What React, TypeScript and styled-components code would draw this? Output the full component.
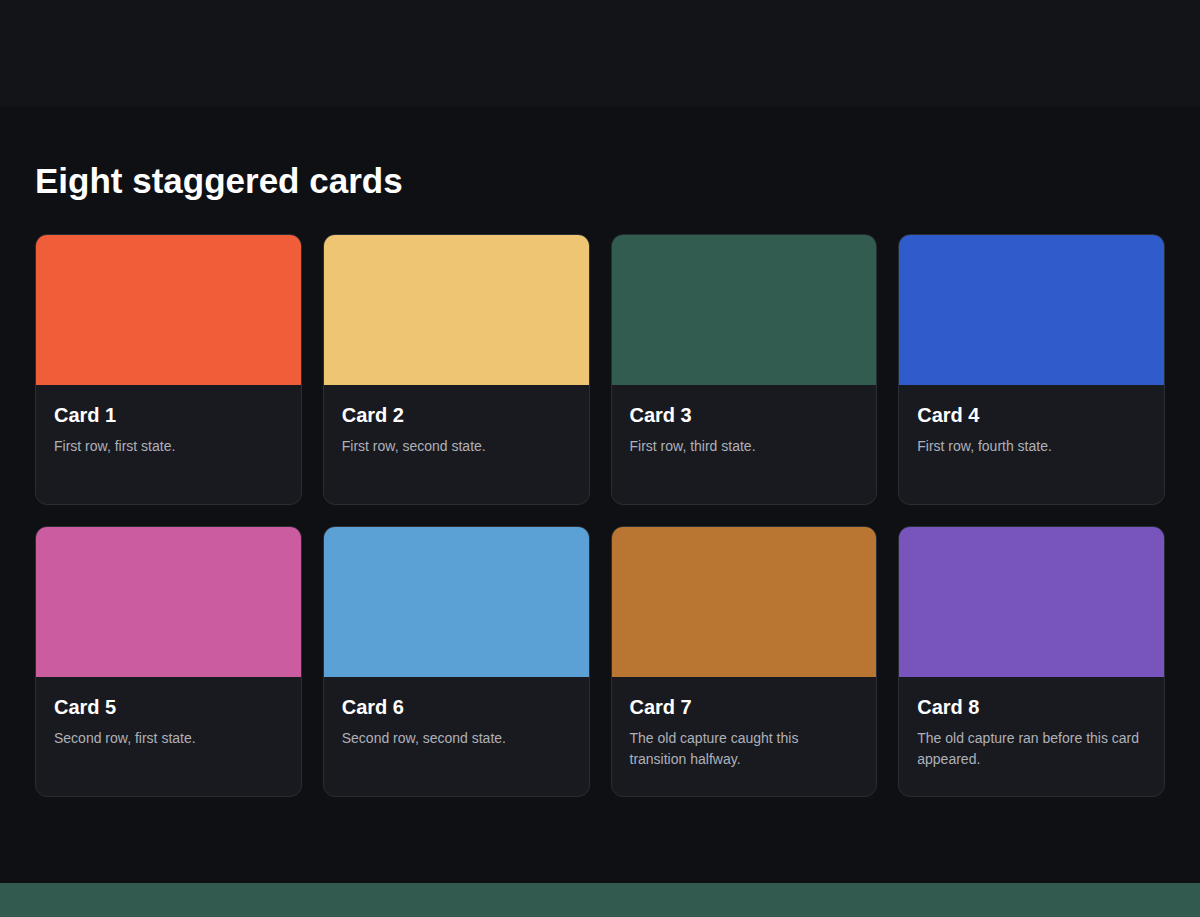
import React from "react";
import styled, { createGlobalStyle } from "styled-components";

const Global = createGlobalStyle`
  html, body { margin: 0; padding: 0; background: #0f1014; }
  body { font-family: "Liberation Sans", Arial, sans-serif; color: #fff; }
  * { box-sizing: border-box; }
`;

const Page = styled.div`
  min-height: 917px;
  display: flex;
  flex-direction: column;
  background: #0f1014;
`;

const TopBand = styled.header`
  height: 107px;
  background: #131418;
`;

const Main = styled.main`
  flex: 1;
  padding: 52px 35px 0;
`;

const Title = styled.h1`
  margin: 0 0 31px;
  font-size: 35px;
  line-height: 44px;
  font-weight: 700;
  color: #ffffff;
`;

const Grid = styled.div`
  display: grid;
  grid-template-columns: repeat(4, 1fr);
  column-gap: 21px;
  row-gap: 21px;
`;

const Card = styled.article`
  height: 271px;
  border: 1px solid #2b2d34;
  border-radius: 12px;
  overflow: hidden;
  background: #191a20;
  display: flex;
  flex-direction: column;
`;

const Swatch = styled.div<{ $color: string }>`
  height: 150px;
  background: ${(p) => p.$color};
  flex-shrink: 0;
`;

const Body = styled.div`
  padding: 17px 18px;
`;

const CardTitle = styled.h2`
  margin: 0 0 8px;
  font-size: 20px;
  line-height: 26px;
  font-weight: 700;
  color: #ffffff;
`;

const CardText = styled.p`
  margin: 0;
  font-size: 14px;
  line-height: 21px;
  color: #afb1b8;
`;

const Footer = styled.footer`
  height: 34px;
  background: #335a4e;
  margin-top: 85px;
`;

const cards = [
  { color: "#f05e39", title: "Card 1", text: "First row, first state." },
  { color: "#eec673", title: "Card 2", text: "First row, second state." },
  { color: "#315c4f", title: "Card 3", text: "First row, third state." },
  { color: "#2f5bcb", title: "Card 4", text: "First row, fourth state." },
  { color: "#cc5ca0", title: "Card 5", text: "Second row, first state." },
  { color: "#5ca1d6", title: "Card 6", text: "Second row, second state." },
  { color: "#b97632", title: "Card 7", text: "The old capture caught this transition halfway." },
  { color: "#7855bd", title: "Card 8", text: "The old capture ran before this card appeared." },
];

export default function App() {
  return (
    <>
      <Global />
      <Page>
        <TopBand />
        <Main>
          <Title>Eight staggered cards</Title>
          <Grid>
            {cards.map((c) => (
              <Card key={c.title}>
                <Swatch $color={c.color} />
                <Body>
                  <CardTitle>{c.title}</CardTitle>
                  <CardText>{c.text}</CardText>
                </Body>
              </Card>
            ))}
          </Grid>
        </Main>
        <Footer />
      </Page>
    </>
  );
}
